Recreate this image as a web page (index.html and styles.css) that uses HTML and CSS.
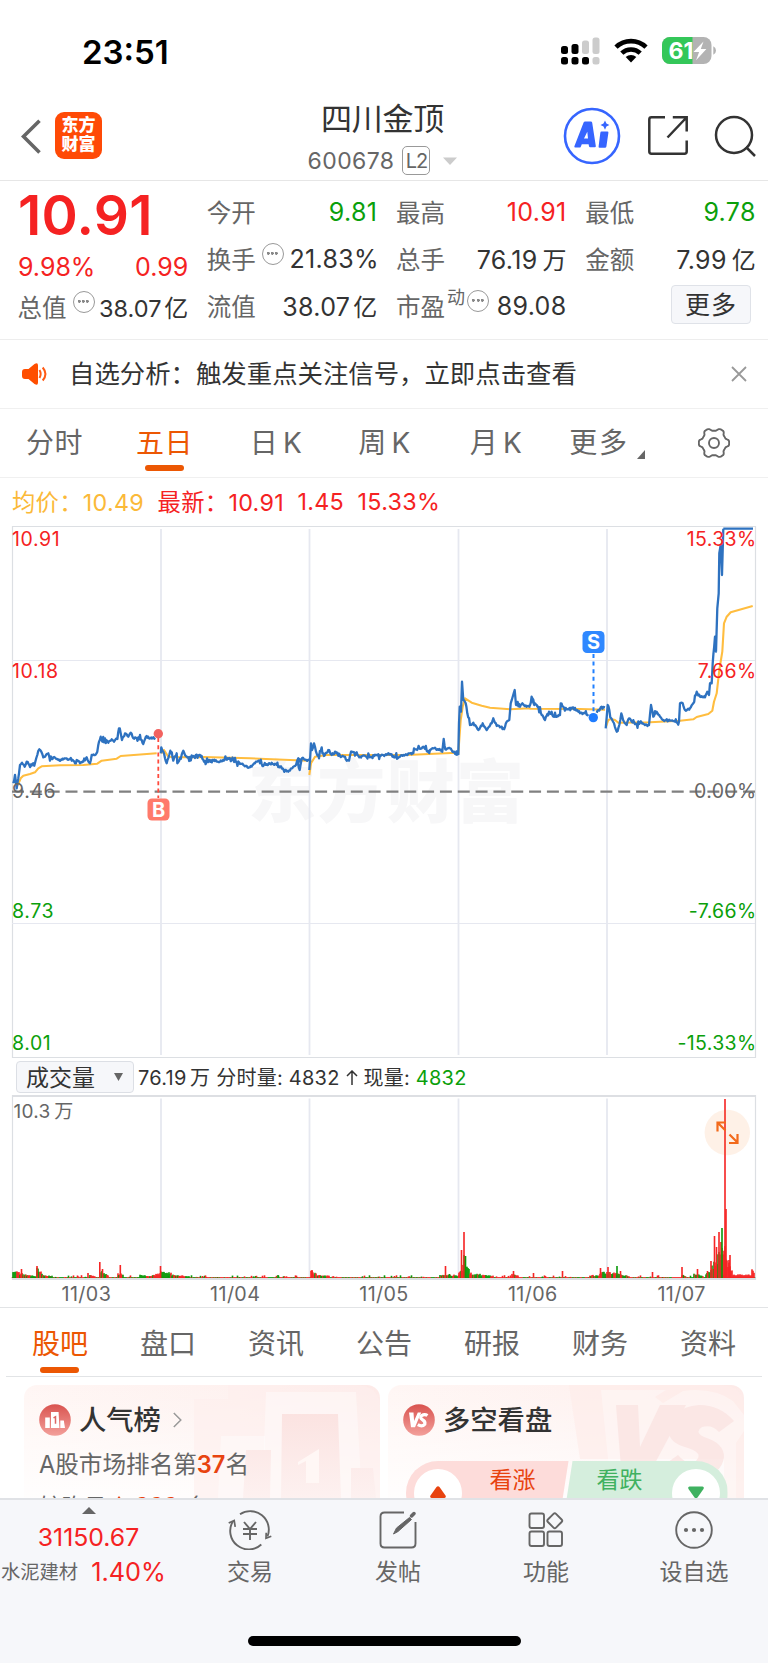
FILE: index.html
```html
<!DOCTYPE html>
<html lang="zh-CN">
<head>
<meta charset="utf-8">
<title>四川金顶 600678</title>
<link rel="stylesheet" href="styles.css">
</head>
<body>
<div class="phone">
  <div class="status">
    <div class="clock">23:51</div>
    <div class="status-icons">
      <svg class="signal" width="39" height="28" viewBox="0 0 39 28">
        <g fill="#000"><rect x="0" y="9" width="7" height="8" rx="2.5"/><rect x="10.5" y="7" width="7" height="10" rx="2.5"/><rect x="0" y="20" width="7" height="7.5" rx="2.5"/><rect x="10.5" y="20" width="7" height="7.5" rx="2.5"/><rect x="21" y="20" width="7" height="7.5" rx="2.5"/></g>
        <g fill="#ccc"><rect x="21" y="3.5" width="7" height="13.5" rx="2.5"/><rect x="31.5" y="0.5" width="7" height="16.5" rx="2.5"/><rect x="31.5" y="20" width="7" height="7.5" rx="2.5"/></g>
      </svg>
      <svg class="wifi" width="34" height="25" viewBox="0 0 34 25">
        <g fill="none" stroke="#000" stroke-width="4.6"><path d="M2 9.2a21.5 21.5 0 0 1 30 0"/><path d="M7.8 15.2a13.4 13.4 0 0 1 18.4 0"/></g>
        <path d="M17 24.6l-5.3-5.5a7.8 7.8 0 0 1 10.6 0z"/>
      </svg>
      <svg class="battery" width="55" height="27" viewBox="0 0 55 27">
        <clipPath id="bat"><rect width="49.5" height="27" rx="8"/></clipPath>
        <g clip-path="url(#bat)"><rect width="50" height="27" fill="#b3b3b3"/><rect width="30.5" height="27" fill="#34c759"/></g>
        <path d="M51.3 9.3q2.7 1.2 2.7 4.2t-2.7 4.2z" fill="#b3b3b3"/>
        <text x="6.5" y="22" class="bat-num" textLength="25" lengthAdjust="spacingAndGlyphs">61</text>
        <path d="M41.5 4.5L31.5 15h5.6l-3 8.2L44.4 12h-5.6z" fill="#fff"/>
      </svg>
    </div>
  </div>

  <header class="header">
    <div class="brand">
      <svg width="20" height="36" viewBox="0 0 20 36" fill="none" stroke="#666" stroke-width="3.6"><path d="M18.5 1.8L2.5 17.5l16 16"/></svg>
      <div class="logo"><span>东方</span><span>财富</span></div>
    </div>
    <div class="title">
      <div class="name">四川金顶</div>
      <div class="code"><span>600678</span><span class="level">L2</span><svg width="14" height="8" viewBox="0 0 14 8"><path d="M0 .5h14L7 8z" fill="#ccc"/></svg></div>
    </div>
    <div class="actions">
      <svg width="58" height="58" viewBox="0 0 58 58"><circle cx="29" cy="29" r="27" fill="none" stroke="#3665ff" stroke-width="2.6"/><path d="M11.3 39.6L20.6 15.5q.4-1 1.5-1h5.7q1.2 0 1.4 1.2l3.6 23.3q.2 1.3-1 1.3h-4.6q-1 0-1.2-1l-.4-2h-6.8l-1 2.4q-.4.9-1.4.9h-4q-1.400 0-1-1zM21 31.500h4l-.7-6.700z" fill="#3665ff" fill-rule="evenodd"/><path d="M38.500 24.500h5.900q1.200 0 1 1.200l-2 13.700q-.2 1.300-1.500 1.300h-5.300q-1.200 0-1-1.200l1.700-13.600q.1-1.400 1.200-1.400zM42 13.500l1.400 3 3 1.500-3 1.500-1.400 3.200-1.500-3.200-3-1.500 3-1.500z" fill="#3665ff"/></svg>
      <svg width="42" height="42" viewBox="0 0 42 42" fill="none" stroke="#333" stroke-width="2.500"><path d="M18 2.300H4.500Q2.300 2.300 2.300 4.500v32q0 2.200 2.200 2.200h33q2.200 0 2.200-2.200V25.500M25.800 2.300H39.700V16.500M39 3L20.500 22.500"/></svg>
      <svg width="42" height="42" viewBox="0 0 42 42" fill="none" stroke="#333" stroke-width="2.500"><circle cx="20" cy="20" r="18"/><path d="M32 32l9 9"/></svg>
    </div>
  </header>

  <section class="quote">
    <div class="col first">
      <div class="price">10.91</div>
      <div class="row change"><span>9.98%</span><span>0.99</span></div>
      <div class="row"><label>总值</label><i class="dots"></i><b class="small">38.07<em>亿</em></b></div>
    </div>
    <div class="col">
      <div class="row"><label>今开</label><b class="down">9.81</b></div>
      <div class="row"><label>换手</label><i class="dots"></i><b class="pct">21.83%</b></div>
      <div class="row"><label>流值</label><b>38.07<em>亿</em></b></div>
    </div>
    <div class="col">
      <div class="row"><label>最高</label><b class="up">10.91</b></div>
      <div class="row"><label>总手</label><b class="wide">76.19<em>万</em></b></div>
      <div class="row"><label>市盈</label><sup>动</sup><i class="dots tight"></i><b>89.08</b></div>
    </div>
    <div class="col">
      <div class="row"><label>最低</label><b class="down">9.78</b></div>
      <div class="row"><label>金额</label><b class="wide">7.99<em>亿</em></b></div>
      <div class="row more-row"><span class="more">更多</span></div>
    </div>
  </section>

  <section class="notice">
    <svg width="26" height="22" viewBox="0 0 26 22"><path d="M3 6h3.500L12.500 1q3.500-2.200 3.500 1.500v17q0 3.700-3.500 1.500L6.500 16H3q-3-.2-3-3V9q0-2.800 3-3z" fill="#ff4e00"/><g fill="none" stroke="#ff5a14" stroke-width="2"><path d="M17.500 7q2.300 4 0 8M20.700 4.500q5.500 6.500 0 13"/></g></svg>
    <span class="notice-text">自选分析：触发重点关注信号，立即点击查看</span>
    <svg width="16" height="16" viewBox="0 0 16 16" stroke="#999" stroke-width="1.800"><path d="M1 1l14 14M15 1L1 15"/></svg>
  </section>

  <nav class="periods">
    <span>分时</span><span class="on">五日</span><span class="k">日<em>K</em></span><span>周<em>K</em></span><span class="k">月<em>K</em></span>
    <span class="other">更多<svg class="corner" width="8" height="9" viewBox="0 0 8 9"><path d="M8 0v9H0z" fill="#666"/></svg></span>
    <span class="gear"><svg width="32" height="32" viewBox="-16 -16 32 32" fill="none" stroke="#666" stroke-width="1.900"><circle r="5"/><path id="gear"/></svg></span>
  </nav>

  <div class="legend"><span class="avg">均价：10.49</span><span>最新：10.91</span><span>1.45</span><span>15.33%</span></div>

  <svg class="chart" viewBox="0 526 768 532" width="768" height="532">
    <text class="mark" x="248" y="817" textLength="276">东方财富</text>
    <g class="frame"><path d="M12.500 526.500H755.500V1057.500H12.500z"/></g>
    <g class="grid"><path d="M161 529V1055M309.500 529V1055M458.500 529V1055M607 529V1055"/><path class="thin" d="M12 660.500H755M12 923.500H755"/></g>
    <path class="zero" d="M12 791.700H755"/>
    <path id="avg" class="line-avg"/>
    <path id="price" class="line-price"/>
    <path d="M158.300 738V798" stroke="#ff4a3d" stroke-width="1.800" stroke-dasharray="4 3.200"/>
    <circle cx="158.300" cy="733.800" r="4.700" fill="#f2625f"/>
    <rect x="147.500" y="798.500" width="22" height="22" rx="4.500" fill="#ff7a6b"/>
    <text class="tag" x="158.500" y="816.700">B</text>
    <path d="M593.500 654V713" stroke="#2080ff" stroke-width="2" stroke-dasharray="4 3.600"/>
    <circle cx="593.300" cy="717.600" r="4.700" fill="#1f7cff"/>
    <rect x="582.500" y="631" width="22" height="22" rx="4.500" fill="#2f88ff"/>
    <text class="tag" x="593.500" y="649.300">S</text>
    <g class="axis">
      <text class="up" x="12" y="545.700">10.91</text><text class="up" x="12" y="678.200">10.18</text><text x="12" y="797.700">9.46</text><text class="down" x="12" y="917.700">8.73</text><text class="down" x="12" y="1049.900">8.01</text>
    </g>
    <g class="axis end">
      <text class="up" x="756.500" y="545.700">15.33%</text><text class="up" x="756.500" y="678.200">7.66%</text><text x="756.500" y="797.700">0.00%</text><text class="down" x="756.500" y="917.700">-7.66%</text><text class="down" x="756.500" y="1049.900">-15.33%</text>
    </g>
  </svg>

  <div class="vol-bar">
    <span class="select"><span>成交量</span><svg width="9" height="8" viewBox="0 0 9 8"><path d="M0 0h9L4.500 8z" fill="#666"/></svg></span>
    <span class="vol-text">76.19<em>万</em> 分时量: 4832 <svg class="arrow" width="12" height="15" viewBox="0 0 12 15" fill="none" stroke="#333" stroke-width="1.500"><path d="M6 15V1M1 6l5-5 5 5"/></svg> 现量: <span class="down">4832</span></span>
  </div>

  <svg class="chart" viewBox="0 1095 768 186" width="768" height="186">
    <path d="M12 1096H756M12 1279H756" stroke="#dddfe3" stroke-width="2"/><path class="side" d="M12.500 1095V1280M755.500 1095V1280"/>
    <path class="grid-v" d="M161 1098.500V1278M309.500 1098.500V1278M458.500 1098.500V1278M607 1098.500V1278"/>
    <text class="vol-max" x="13.500" y="1118">10.3<tspan dx="3.500">万</tspan></text>
    <g id="bars"></g>
    <circle cx="727.300" cy="1132.500" r="22.700" fill="#f97316" fill-opacity=".1"/>
    <g fill="none" stroke="#f26a1b" stroke-width="2.200"><path d="M717.500 1131.500V1122.500H726M718 1123l7.500 7.500M729.500 1134.500l7.500 7.500M729 1143h8.500V1134"/></g>
  </svg>

  <div class="dates"><span>11/03</span><span>11/04</span><span>11/05</span><span>11/06</span><span>11/07</span></div>

  <nav class="tabs"><span class="on">股吧</span><span>盘口</span><span>资讯</span><span>公告</span><span>研报</span><span>财务</span><span>资料</span></nav>

  <section class="cards">
    <article class="card">
      <svg class="art" width="356" height="113" viewBox="0 0 356 113">
        <defs>
          <linearGradient id="fadeA" x1="0" y1="0" x2="0" y2="1"><stop offset="0" stop-color="#fbe3e1"/><stop offset="1" stop-color="#fdf1f0"/></linearGradient>
          <linearGradient id="icon" x1="0" y1="0" x2="0" y2="1"><stop offset="0" stop-color="#d9534f"/><stop offset="1" stop-color="#f3a09b"/></linearGradient>
        </defs>
        <path d="M170 14h34V0h128q24 0 24 24v89H170z" fill="#fdefed" opacity=".6"/>
        <path d="M238 113l4-106h90l6 106z" fill="#fff" opacity=".4"/><path d="M194 113l3-62h44v62z" fill="#fff" opacity=".4"/>
        <path d="M257 113l1-84h56l3 84zM219 113l3-48h25l-1 48zM327 113V83h22l3 30z" fill="url(#fadeA)"/>
        <path d="M274 77l21-13v34h-13V76l-8 4z" fill="#fff7f5"/>
      </svg>
      <div class="card-head">
        <svg width="32" height="32" viewBox="0 0 32 32"><circle cx="16" cy="16" r="15.800" fill="url(#icon)"/><path d="M6.200 13.500h4.600V24H6.200zM12 8h7.600l.8 16h-8.400zM21.300 16.500h3.500L26 24h-4.700z" fill="#fff"/><path d="M14.500 13.800l2-1v7" fill="none" stroke="#dc6763" stroke-width="1.500"/></svg>
        <h3>人气榜</h3>
        <svg width="9" height="16" viewBox="0 0 9 16" fill="none" stroke="#999" stroke-width="1.500"><path d="M.8 1l7 7-7 7"/></svg>
      </div>
      <p class="rank">A股市场排名第<b>37</b>名</p>
      <p class="rank second">较昨日<svg width="12" height="18" viewBox="0 0 12 18"><path d="M6 0l6 8H8.500v10h-5V8H0z" fill="#e8430f"/></svg><b>666</b>名</p>
    </article>
    <article class="card">
      <svg class="art" width="356" height="113" viewBox="0 0 356 113">
        <path d="M181 0h151q24 0 24 24v89h-20V74H192z" fill="#fdecea" opacity=".7"/>
        <path d="M213 5h65l-11 7 8 6 20-12q30-4 50 10l11 14v16l-8 12v55H224z" fill="#fff" opacity=".35"/>
        <g fill="#fbe2e0" opacity=".7"><path d="M228 20h22l2 42 20-42h26l-40 75h-24z"/><path d="M346 36q-14-16-35-16-30 3-31 24 0 14 20 19 16 5 8 13-9 5-18-6l-14 10q14 16 32 14 26-4 28-22 0-14-20-20-10-5-2-10 10-3 17 5z"/></g>
      </svg>
      <div class="card-head">
        <svg width="32" height="32" viewBox="0 0 32 32"><circle cx="16" cy="16" r="15.800" fill="url(#icon)"/><path d="M6 8.500h4.500l.6 8.500 3.700-8.500h3.400L12 23.300H8z" fill="#fff"/><path d="M24.500 11.500q-3-2-6 .2-2 2.500 1 4t2.300 4.500q-2.600 3-7 .4" fill="none" stroke="#fff" stroke-width="3.200"/></svg>
        <h3>多空看盘</h3>
      </div>
      <div class="vote">
        <div class="bull"><i class="knob"><svg width="16" height="13" viewBox="0 0 16 13"><path d="M6.500 1q1.500-1.500 3 0L15.500 9.500q1 2-1 2.500h-13q-2-.5-1-2.500z" fill="#e8430f"/></svg></i><span>看涨</span></div>
        <div class="bear"><span>看跌</span><i class="knob"><svg width="16" height="13" viewBox="0 0 16 13"><path d="M6.500 11.500q1.500 1.500 3 0l6-8.500q1-2-1-2.500h-13q-2 .5-1 2.500z" fill="#3fb160"/></svg></i></div>
      </div>
    </article>
  </section>

  <footer class="dock">
    <div class="index">
      <svg width="14" height="7" viewBox="0 0 14 7"><path d="M0 7l7-7 7 7z" fill="#666"/></svg>
      <div class="index-val">31150.67</div>
      <div class="index-row"><span>水泥建材</span><b>1.40%</b></div>
    </div>
    <div class="item"><svg width="44" height="40" viewBox="0 0 44 40" fill="none" stroke="#666" stroke-width="1.900"><path d="M12 4.300A18.500 18.500 0 0 1 39.500 26.500M33.300 34.500A18.500 18.500 0 0 1 4.800 11.500"/><path d="M.7 13l5.500-2.500 1 6.300M43.300 26.300l-5.300 2 .2-5.500" stroke-width="1.700"/><path d="M16 12l6 7 6-7M15 19h14M15 24h14M22 19v11"/></svg><span>交易</span></div>
    <div class="item"><svg width="40" height="40" viewBox="0 0 40 40" fill="none" stroke="#666" stroke-width="1.900"><path d="M26 2.500H6.500q-4 0-4 4v27q0 4 4 4h27q4 0 4-4V12"/><path d="M15.500 24l3-6L31.500 7.500l2 2L20 21.500z" fill="#666" stroke-width="1"/><path d="M33.500 6l2.500-2.500" stroke-width="3.500" stroke-linecap="round"/></svg><span>发帖</span></div>
    <div class="item"><svg width="40" height="40" viewBox="0 0 40 40" fill="none" stroke="#666" stroke-width="1.900"><rect x="3.500" y="3.500" width="14.500" height="14.500" rx="2"/><rect x="3.500" y="21.500" width="14.500" height="14.500" rx="2"/><rect x="21.500" y="21.500" width="14.500" height="14.500" rx="2"/><rect x="23" y="5" width="11.500" height="11.500" rx="1.800" transform="rotate(45 28.750 10.750)"/></svg><span>功能</span></div>
    <div class="item"><svg width="40" height="40" viewBox="0 0 40 40"><circle cx="20" cy="20" r="17.800" fill="none" stroke="#666" stroke-width="1.900"/><g fill="#666"><circle cx="12" cy="20" r="2.100"/><circle cx="20" cy="20" r="2.100"/><circle cx="28" cy="20" r="2.100"/></g></svg><span>设自选</span></div>
    <div class="home"></div>
  </footer>
</div>
<script src="chart.js"></script>
</body>
</html>
```

FILE: styles.css
```css
* { box-sizing: border-box; }
body { margin: 0; background: #fff; color: #333; font-family: Inter, "Noto Sans CJK SC", sans-serif; -webkit-font-smoothing: antialiased; }
svg { display: block; flex: none; }
em, i { font-style: normal; }
.phone { width: 768px; height: 1663px; overflow: hidden; display: flex; flex-direction: column; white-space: nowrap; }
.phone > * { flex: none; }
.up { color: #f52222; fill: #f52222; }
.down { color: #0b9f0b; fill: #0b9f0b; }

.status { height: 96px; padding: 0 51px 0 82px; display: flex; align-items: flex-start; justify-content: space-between; }
.clock { margin-top: 31px; line-height: 42px; font-size: 33px; font-weight: 600; color: #000; letter-spacing: 0; }
.status-icons { display: flex; align-items: flex-start; padding-top: 37px; }
.wifi { margin: 1px 14px 0 14px; }
.bat-num { font-size: 23px; font-weight: 700; fill: #fff; }

.header { height: 85px; border-bottom: 1px solid #e6e6e6; padding: 0 12px 0 21px; display: grid; grid-template-columns: 200px 1fr 200px; }
.brand { display: flex; padding-top: 16px; gap: 14px; align-items: flex-start; }
.brand svg { margin-top: 7px; }
.logo { width: 47px; height: 47px; border-radius: 9px; background: #ff4a06; color: #fff; font-size: 17px; font-weight: 900; line-height: 19px; padding-top: 4px; text-align: center; display: flex; flex-direction: column; }
.title { display: flex; flex-direction: column; align-items: center; padding-right: 12px; }
.name { font-size: 31px; line-height: 40px; margin-top: 3px; letter-spacing: -.2px; }
.code { display: flex; align-items: center; gap: 8px; font-size: 23px; line-height: 28px; color: #666; margin-top: 7px; letter-spacing: .4px; }
.level { border: 1.500px solid #999; border-radius: 5px; width: 28px; height: 29px; font-size: 20px; text-align: center; letter-spacing: -1px; }
.code svg { margin-left: 5px; }
.actions { display: flex; justify-content: flex-end; align-items: flex-start; padding-top: 11px; }
.actions svg + svg { margin: 8px 0 0 25.500px; }

.quote { height: 159px; border-bottom: 1px solid #ededed; padding: 0 13px 0 18px; display: grid; grid-template-columns: repeat(4, 1fr); gap: 20px; }
.col { padding-top: 7px; min-width: 0; }
.col.first { padding-top: 0; }
.row { height: 47px; display: flex; align-items: center; font-size: 25px; }
.row label { color: #666; font-size: 24.500px; margin-left: -.5px; }
.row b { margin-left: auto; margin-right: -.8px; font-weight: 400; letter-spacing: .35px; }
.row em { margin-left: 3px; font-size: 24px; letter-spacing: 0; }
.row .wide em { margin-left: 5px; }
.row .pct { margin-right: -2.500px; }
.row .small { font-size: 23.500px; letter-spacing: .1px; margin-right: -1px; }
.row .small em { margin-left: 2.500px; }
.price { height: 69px; line-height: 69px; font-size: 55px; font-weight: 600; color: #f52222; letter-spacing: .3px; }
.change { height: 33px; justify-content: space-between; color: #f52222; margin-right: -1px; }
.dots { width: 22px; height: 22px; border: 1.700px solid #999; border-radius: 50%; margin: -10px 0 0 6px; background: radial-gradient(circle, #888 1.200px, transparent 1.700px) center / 4.700px 4.700px no-repeat, radial-gradient(circle, #888 1.200px, transparent 1.700px) 3px center / 4.700px 4.700px no-repeat, radial-gradient(circle, #888 1.200px, transparent 1.700px) 11.500px center / 4.700px 4.700px no-repeat; }
.dots.tight { margin-left: 2px; }
.row sup { font-size: 18px; color: #666; margin: -16px 0 0 2px; vertical-align: baseline; line-height: 1; }
.more-row { justify-content: flex-end; align-items: flex-start; padding-top: 3px; }
.more { width: 80px; height: 39px; margin-right: 4px; border: 1.500px solid #dfe2e8; border-radius: 4px; background: #f6f7fa; line-height: 38px; text-align: center; font-size: 25px; letter-spacing: 1px; }

.notice { height: 69px; border-bottom: 1px solid #f0f0f0; padding: 0 21px 0 22px; display: flex; align-items: center; }
.notice-text { margin: -5px 0 0 21px; font-size: 25.400px; flex: 1; }

.periods { height: 69px; border-bottom: 1px solid #f0f0f0; display: grid; grid-template-columns: repeat(6, 110px) 108px; font-size: 28px; letter-spacing: .4px; color: #666; }
.periods > span { position: relative; display: flex; justify-content: center; align-items: center; line-height: 68px; padding-right: 1px; }
.periods em { margin-left: 5px; }
.periods .k { padding: 0 0 0 2px; }
.periods .other { letter-spacing: 1.800px; padding: 0 0 0 4px; }
.periods .on, .tabs .on { color: #ec5703; }
.on::after { content: ""; position: absolute; left: 50%; margin-left: -20px; width: 39px; height: 6px; border-radius: 3px; background: #ec5703; bottom: 6px; }
.corner { margin: 22px 0 0 8px; }

.legend { height: 48px; padding: 0 12px 2px; display: flex; align-items: center; gap: 13.500px; font-size: 23.300px; letter-spacing: .3px; color: #f52222; }
.legend .avg { color: #fbb938; }

.chart { overflow: visible; }
.mark { font-family: "Noto Sans CJK SC", sans-serif; font-size: 68px; font-weight: 900; fill: #f7f7f8; }
.frame path, .side { fill: none; stroke: #dcdfe3; stroke-width: 1.200px; }
.grid path, .grid-v { fill: none; stroke: #e6e8f0; stroke-width: 1.800px; }
.grid .thin { stroke-width: 1.200px; }
.zero { stroke: #808080; stroke-width: 2.200px; stroke-dasharray: 12 5.830; }
.line-avg { fill: none; stroke: #ffbd3f; stroke-width: 2.100px; stroke-linejoin: round; }
.line-price { fill: none; stroke: #2e72c0; stroke-width: 2.300px; stroke-linejoin: round; }
.tag { font-size: 20px; font-weight: 700; fill: #fff; text-anchor: middle; }
.axis { font-size: 19.500px; fill: #666; letter-spacing: .6px; }
.axis.end { text-anchor: end; letter-spacing: .35px; }

.vol-bar { height: 37px; padding-left: 16px; display: flex; align-items: center; }
.select { width: 118px; height: 32px; border: 1.500px solid #dcdfe5; border-radius: 4px; background: #f6f7fa; display: flex; align-items: center; justify-content: space-between; padding: 0 10px 0 9px; font-size: 23px; }
.select span { margin-top: -2px; }
.vol-text { margin-left: 4px; font-size: 20px; letter-spacing: .25px; }
.vol-text em { margin-left: 3.500px; }
.arrow { display: inline-block; }
.vol-max { font-size: 19px; fill: #666; letter-spacing: .3px; }

.dates { height: 27px; padding: 0 12px; display: grid; grid-template-columns: repeat(5, 1fr); text-align: center; font-size: 19.700px; letter-spacing: .4px; line-height: 27px; color: #666; border-bottom: 1px solid #e2e4e6; }
.tabs { height: 69px; margin: 0 6px; border-bottom: 1px solid #e2e4e6; display: grid; grid-template-columns: repeat(7, 1fr); text-align: center; font-size: 28px; line-height: 72px; color: #666; }
.tabs > span { position: relative; height: 68px; }
.tabs .on::after { bottom: 3px; }

.cards { height: 121px; padding: 8px 24px 0; display: grid; grid-template-columns: 1fr 1fr; gap: 8px; overflow: hidden; }
.card { position: relative; height: 160px; border-radius: 13px; overflow: hidden; padding: 19px 16px; background: linear-gradient(90deg, #fff6f4, #fef1ef 60%, #fdeae8); }
.card::before { content: ""; position: absolute; inset: 0; background: linear-gradient(180deg, rgba(255,255,255,0), #fff 80%); }
.art { position: absolute; left: 0; top: 0; }
.card-head { position: relative; display: flex; align-items: center; gap: 8px; height: 32px; margin-left: -1px; }
.card-head h3 { margin: 2px 0 0 0; font-size: 27.300px; font-weight: 500; line-height: 32px; }
.card-head h3 + svg { margin-left: 4px; }
.rank { position: relative; margin: 13px 0 0 -1px; font-size: 23.600px; line-height: 32px; color: #666; display: flex; align-items: center; }
.rank b { color: #e8430f; font-weight: 600; }
.second { margin-top: 10px; font-size: 22.500px; }
.second svg { margin: -4px 10px 0 6px; }
.second b { margin: -2px 9px 0 0; }
.vote { position: relative; display: grid; grid-template-columns: 166px 156px; margin: 25px 0 0 1.500px; height: 64px; }
.bull, .bear { display: flex; align-items: flex-start; justify-content: space-between; font-size: 23px; line-height: 36px; padding: 8px 8px 0; }
.bull { border-radius: 32px 0 0 32px; background: #fddcda; clip-path: polygon(0 0, 163px 0, 153px 64px, 0 64px); color: #e8430f; padding-right: 36px; }
.bear { margin-left: -9px; border-radius: 0 32px 32px 0; background: #d5eedd; clip-path: polygon(10px 0, 100% 0, 100% 100%, 0 100%); color: #3fb160; padding-left: 34px; }
.bull span, .bear span { margin-top: -7px; }
.knob { width: 48px; height: 48px; border-radius: 50%; background: #fff; display: flex; justify-content: center; padding-top: 17px; }

.dock { height: 165px; border-top: 2px solid #e0e2e6; background: #f6f7fa; display: grid; grid-template-columns: 176px repeat(4, 148px); align-content: start; position: relative; color: #666; }
.index { display: flex; flex-direction: column; align-items: center; padding: 7px 0 0 1px; }
.index-val { color: #f52222; font-size: 24.800px; line-height: 30px; margin-top: 8px; }
.index-row { display: flex; align-self: flex-start; align-items: center; gap: 13px; font-size: 19.300px; line-height: 36px; padding-left: 0; margin-top: 2px; }
.index-row b { font-weight: 400; color: #f52222; font-size: 25.300px; }
.item { display: flex; flex-direction: column; align-items: center; padding-top: 10px; font-size: 23px; line-height: 34px; }
.item span { margin-top: 5px; }
.home { position: absolute; left: 247.500px; bottom: 17px; width: 273px; height: 10px; border-radius: 5px; background: #000; }
```

FILE: chart.js
```js
// Deterministic noise so the intraday lines keep the same texture on each load.
let seed = 7;
const rnd = () => ((seed = (seed * 16807) % 2147483647) / 2147483647);

// Anchors are stored at three units per pixel, relative to an origin.
const parse = (s, ox, oy) => s.split(' ').map(p => {
  const [x, y] = p.split(',').map(Number);
  return [ox + x / 3, oy + y / 3];
});

const days = [
  parse('40,790 45,765 50,805 57,760 60,735 66,728 74,740 80,725 88,735 100,730 106,725 112,705 118,688 124,695 130,712 138,705 145,700 150,722 160,712 175,720 190,718 200,715 215,722 230,720 240,730 250,725 260,712 270,730 275,705 285,705 292,695 297,665 302,650 307,665 315,655 325,668 335,658 342,665 350,655 357,625 362,640 366,660 375,640 385,650 392,638 400,655 415,652 425,660 430,672 440,648 447,655 465,653', 0, 520),
  parse('482,700 484,682 490,695 495,715 500,730 505,715 511,692 520,722 530,700 532,730 540,715 550,692 555,705 565,712 580,708 600,705 612,725 640,722 660,725 690,715 710,728 730,735 750,742 765,730 775,722 790,738 815,728 830,735 848,745 865,755 880,740 888,735 895,715 900,718', 0, 520)
    .concat(parse('15,370 20,390 27,355 40,360 55,362', 290, 640).map(([x, y]) => [x + 3, y])),
  parse('58,390 63,310 66,330 72,310 78,335 87,355 95,322 102,348 115,330 125,345 135,335 150,348 165,350 170,362 177,362 183,335 200,337 208,352 225,347 240,352 260,345 280,345 290,345 300,342 312,352 330,350 345,345 360,340 370,340 372,325 395,325 400,320 410,332 430,325 450,330 457,335 461,297 466,328 480,325 490,335 502,347', 290, 640),
  parse('505,345 507,250 509,200 513,215 516,125 520,180 527,190 532,220 540,255 550,248 565,270 578,250 590,270 605,250 610,235 620,258 640,265 650,245 658,240 662,190 668,170 674,150 678,195 690,200 697,190 710,200 718,200 727,175 733,195', 290, 640)
    .concat(parse('7,540 15,550 25,560 35,585 45,600 57,575 70,590 90,585 92,550 100,560 112,568 130,562 145,575 160,580 175,583', 530, 520)),
  parse('200,578 215,560 225,562', 530, 520),
  parse('227,625 233,555 238,570 244,595 252,610 260,635 268,615 274,580 282,605 290,615 297,595 305,605 320,612 340,612 357,615 363,555 370,590 380,575 390,590 400,600 420,602 435,605 447,605 450,550 458,550 465,570 480,565 490,550 500,515 510,530 525,532 532,515 537,525 540,490 545,490 548,430 555,350 558,395 562,265 566,220 568,100 572,75 576,165 580,26', 530, 520)
];

const f = n => n.toFixed(1);
const jagged = pts => {
  let d = `M${f(pts[0][0])} ${f(pts[0][1])}`;
  for (let i = 1; i < pts.length; i++) {
    const [x0, y0] = pts[i - 1], [x1, y1] = pts[i];
    const n = Math.max(1, Math.floor((x1 - x0) / 0.75));
    for (let k = 1; k < n; k++) {
      const t = k / n, r = rnd();
      const amp = r > 0.82 ? 4 : 1.1;
      d += `L${f(x0 + (x1 - x0) * t)} ${f(y0 + (y1 - y0) * t + (rnd() - 0.5) * 2 * amp)}`;
    }
    d += `L${f(x1)} ${f(y1)}`;
  }
  return d;
};
document.getElementById('price').setAttribute('d', days.map(jagged).join('') + 'M723.300 528.700H753');

const smooth = pts => 'M' + pts.map(p => f(p[0]) + ' ' + f(p[1])).join('L');
document.getElementById('avg').setAttribute('d', [
  parse('50,800 57,787 62,775 70,767 90,762 105,757 115,745 125,739 180,736 250,735 292,731 305,722 350,716 362,708 470,700', 0, 520),
  parse('484,700 492,690 505,710 530,712 610,711 750,715 925,722', 0, 520),
  parse('58,405 63,370 75,350 110,345 350,345 500,338 505,340 512,240 518,200 525,175 545,188 575,197 600,203 660,208 720,205', 290, 640)
    .concat(parse('0,566 150,567 225,569', 530, 520)),
  parse('228,620 235,600 243,597 255,600 265,608 360,607 450,602 490,598 500,591 535,582 547,572 552,545 560,520 568,450 577,395 582,310 590,290 602,277 668,258', 530, 520)
].map(smooth).join(''));

// Volume: low random floor plus named peaks [x, height, colour].
const R = '#f62424', G = '#0a9a0a', base = 1278;
const bars = [];
for (let x = 12.500; x < 755; x += 1) bars.push([x, 0.8 + (rnd() > 0.82 ? rnd() * 2 : 0), rnd() > 0.45 ? R : G]);
const hump = (x0, x1, h0, h1, mix) => {
  for (let x = x0; x < x1; x += 1) {
    const t = (x - x0) / (x1 - x0);
    bars.push([x, (h0 + (h1 - h0) * t) * (0.65 + rnd() * 0.5), rnd() < mix ? R : G]);
  }
};
hump(13, 27, 7, 3, .4); hump(27, 37, 3, 2, .5); hump(37, 43, 9, 5, .3); hump(43, 53, 3, 2, .4);
hump(90, 96, 3, 2, .5); hump(101, 109, 7, 2, .3); hump(118, 124, 5, 3, .6); hump(140, 150, 3, 2, .2);
hump(150, 161, 2, 5, .8); hump(161, 172, 7, 5, .2); hump(172, 190, 3, 2, .3); hump(311, 318, 7, 3, .7); hump(318, 330, 3, 2, .6);
hump(440, 458, 3, 3, .3); hump(459, 464, 6, 14, .8); hump(464, 470, 21, 6, .1); hump(470, 494, 5, 2, .4);
hump(512, 519, 4, 3, .5); hump(590, 600, 3, 2, .3); hump(600, 613, 6, 5, .5); hump(613, 630, 5, 2, .4);
hump(682, 686, 4, 1, .2); hump(694, 704, 4, 2, .2); hump(706, 712, 4, 8, .4); hump(712, 722, 12, 28, .45);
hump(722, 726, 28, 28, .9); hump(726, 733, 20, 6, 1); hump(733, 752, 3.500, 3, 1); hump(752, 755, 8, 8, 1);
bars.push([21.500, 9, R], [37, 12, R], [88, 5, R], [99.800, 16, R], [102.500, 9, R], [120.300, 13, R], [160.500, 12, R], [312, 8, R],
  [278, 3, G], [445.500, 12, R], [449.500, 4, G], [461.500, 28, R], [464, 46, R], [465.500, 22, G], [513.500, 7, R], [533.500, 5, R], [562.500, 7, R],
  [600.500, 10, R], [608, 11, R], [617, 12, G], [620.500, 7, R], [652.500, 6, R], [682, 11, R], [697.500, 9, R], [707.500, 7, R], [711, 17, R],
  [714.500, 42, R], [716.500, 31, R], [719, 46, R], [721, 36, R], [722, 50, G], [725, 179, R], [726, 69, R], [730, 23, R], [729, 18, R]);
document.getElementById('bars').innerHTML = bars.map(([x, h, c]) =>
  `<rect x="${f(x - 0.800)}" y="${f(base - h)}" width="1.600" height="${f(h)}" fill="${c}"/>`).join('');

// Six-lobed gear outline.
let g = '';
for (let i = 0; i <= 96; i++) {
  const a = i / 96 * Math.PI * 2, w = Math.cos(6 * a);
  const r = 13.700 + 1.500 * Math.tanh(2 * w) / Math.tanh(2);
  g += (i ? 'L' : 'M') + f(r * Math.cos(a)) + ' ' + f(r * Math.sin(a));
}
document.getElementById('gear').setAttribute('d', g + 'z');
```
